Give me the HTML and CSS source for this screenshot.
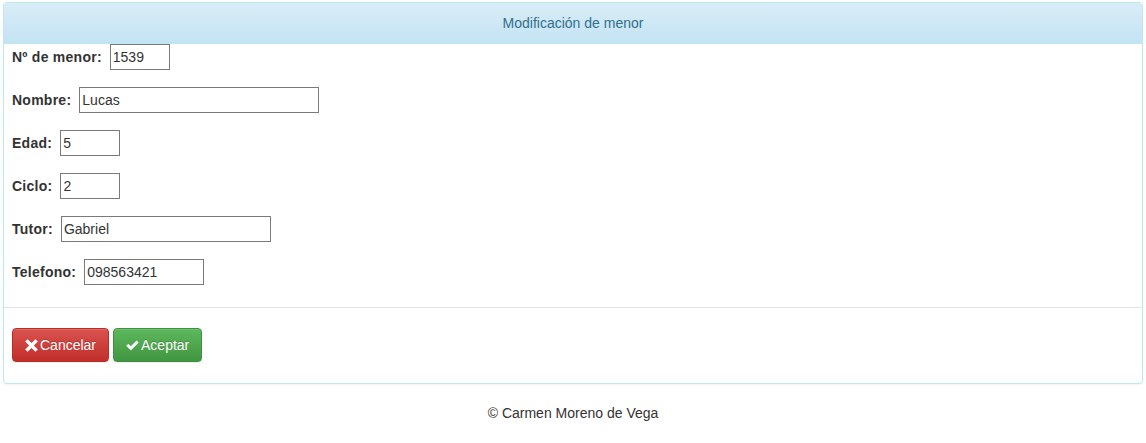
FILE: index.html
```html
<!DOCTYPE html>
<html lang="es">
<head>
<meta charset="utf-8">
<title>Modificación de menor</title>
<link rel="stylesheet" href="styles.css">
</head>
<body>
<div class="page">
  <div class="panel">
    <div class="panel-heading">Modificación de menor</div>
    <form class="panel-body">
      <div class="form-group"><label>Nº de menor:</label> <input class="w60" type="text" value="1539"></div>
      <div class="form-group"><label>Nombre:</label> <input class="w240" type="text" value="Lucas"></div>
      <div class="form-group"><label>Edad:</label> <input class="w60" type="text" value="5"></div>
      <div class="form-group"><label>Ciclo:</label> <input class="w60" type="text" value="2"></div>
      <div class="form-group"><label>Tutor:</label> <input class="w210" type="text" value="Gabriel"></div>
      <div class="form-group"><label>Telefono:</label> <input class="w120" type="text" value="098563421"></div>
    </form>
    <div class="panel-actions">
      <button class="btn btn-danger" type="button"><svg class="ico" viewBox="0 0 14 14" width="13" height="13"><path d="M2.8 0.2 L7 4.4 L11.2 0.2 L13.8 2.8 L9.6 7 L13.8 11.2 L11.2 13.8 L7 9.6 L2.8 13.8 L0.2 11.2 L4.4 7 L0.2 2.8 Z" fill="#fff"/></svg>Cancelar</button>
      <button class="btn btn-success" type="button"><svg class="ico" viewBox="0 0 14 14" width="13" height="13"><path d="M0.3 7.4 L2.6 5.1 L5.2 7.7 L11.4 1.5 L13.7 3.8 L5.2 12.3 Z" fill="#fff"/></svg>Aceptar</button>
    </div>
  </div>
  <footer class="footer">© Carmen Moreno de Vega</footer>
</div>
</body>
</html>
```
FILE: styles.css
```css
* { box-sizing: border-box; }
html, body { margin: 0; padding: 0; background: #fff; }
body {
  font-family: "Liberation Sans", Arial, Helvetica, sans-serif;
  font-size: 14px;
  line-height: 1.42857;
  color: #333;
}
.page { padding: 2px 3px 0 3px; }
.panel {
  border: 1px solid #bce8f1;
  border-radius: 4px;
  background: #fff;
  box-shadow: 0 1px 2px rgba(0,0,0,0.05);
}
.panel-heading {
  height: 41px;
  line-height: 40px;
  text-align: center;
  color: #31708f;
  font-size: 14px;
  background: linear-gradient(to bottom, #d9edf7 0%, #c4e3f3 100%);
  border-bottom: 1px solid #bce8f1;
  border-radius: 3px 3px 0 0;
}
.panel-body {
  margin: 0;
  padding: 0 8px 0 8px;
  display: flex;
  flex-direction: column;
  gap: 17px;
}
.form-group {
  display: flex;
  align-items: baseline;
  height: 26px;
}
.form-group label {
  font-weight: bold;
  font-size: 14px;
  letter-spacing: 0.25px;
  color: #333;
  margin-right: 8px;
}
.form-group input {
  height: 26px;
  border: 1px solid #7a7a7a;
  padding: 1px 2px;
  font-family: "Liberation Sans", Arial, sans-serif;
  font-size: 14px;
  color: #333;
  background: #fff;
  margin: 0;
}
.w60 { width: 60px; }
.w120 { width: 120px; }
.w210 { width: 210px; }
.w240 { width: 240px; }
.panel-actions {
  margin-top: 22px;
  border-top: 1px solid #e5e5e5;
  padding: 20px 8px 21px 8px;
  display: flex;
  gap: 4px;
}
.btn {
  display: inline-flex;
  align-items: center;
  height: 34px;
  padding: 6px 12px;
  font-family: "Liberation Sans", Arial, sans-serif;
  font-size: 14px;
  color: #fff;
  border-radius: 4px;
  cursor: pointer;
  text-shadow: 0 -1px 0 rgba(0,0,0,0.2);
  box-shadow: inset 0 1px 0 rgba(255,255,255,0.15), 0 1px 1px rgba(0,0,0,0.075);
}
.btn .ico { margin-right: 2px; }
.btn-danger {
  background: linear-gradient(to bottom, #d9534f 0%, #c12e2a 100%);
  border: 1px solid #b92c28;
}
.btn-success {
  background: linear-gradient(to bottom, #5cb85c 0%, #419641 100%);
  border: 1px solid #3e8f3e;
}
.footer {
  text-align: center;
  font-size: 14px;
  color: #333;
  padding-top: 20px;
}
```
